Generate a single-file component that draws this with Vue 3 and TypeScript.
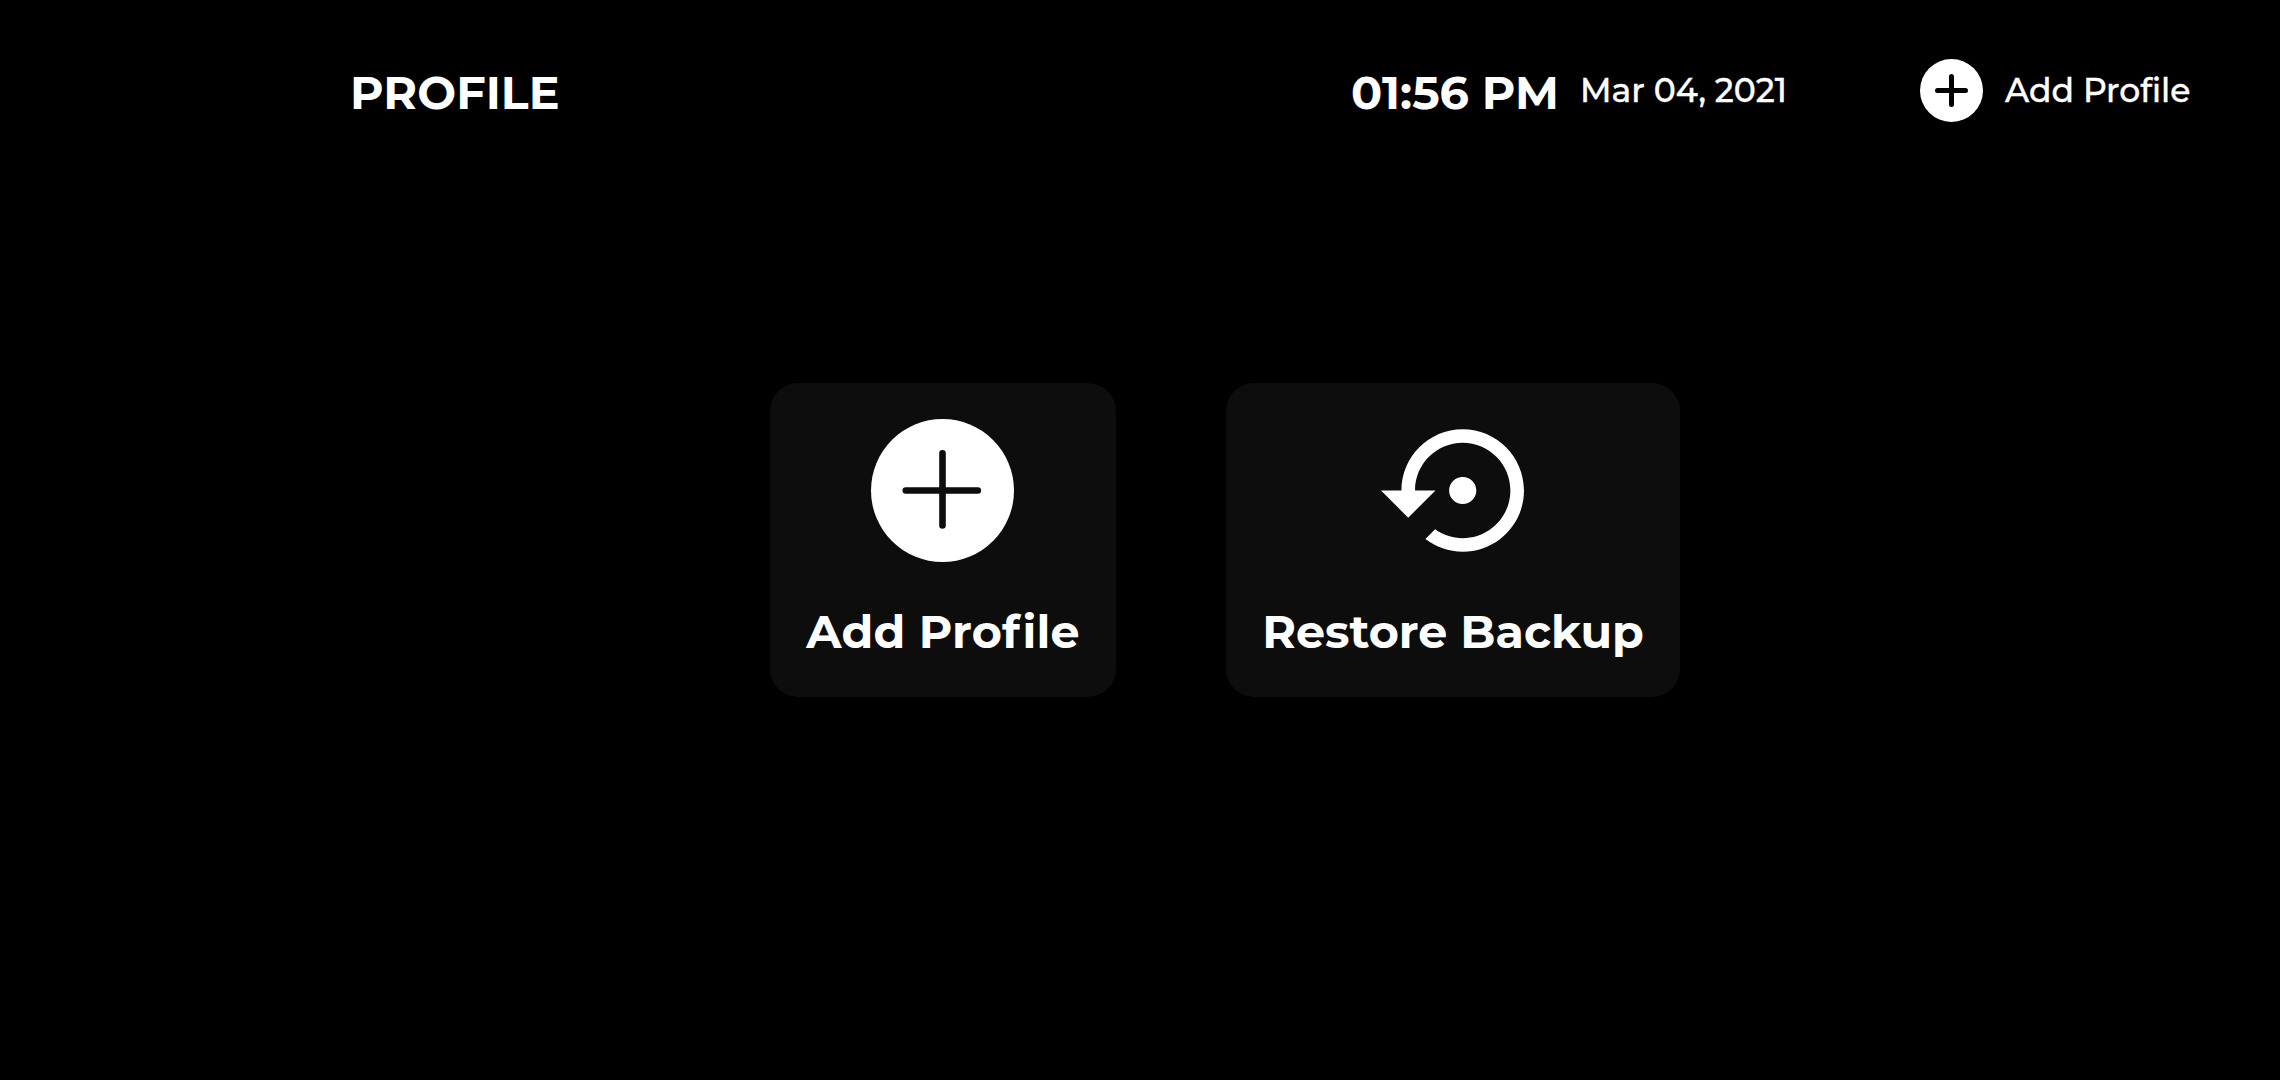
<script setup lang="ts">
import { ref } from 'vue';

const title = ref('PROFILE');
const time = ref('01:56 PM');
const date = ref('Mar 04, 2021');
</script>

<template>
  <div class="screen">
    <header class="header">
      <h1 class="title">{{ title }}</h1>
      <div class="clock">{{ time }}</div>
      <div class="date">{{ date }}</div>
      <button class="add-btn">
        <svg class="add-icon" viewBox="0 0 63 63">
          <circle cx="31.5" cy="31.5" r="31.5" fill="#fff" />
          <path d="M17.5 31.5h28M31.5 17.5v28" stroke="#000" stroke-width="5" stroke-linecap="round" />
        </svg>
        <span class="add-label">Add Profile</span>
      </button>
    </header>

    <main class="content">
      <button class="card add">
        <svg class="card-icon" viewBox="0 0 143 143">
          <circle cx="71.5" cy="71.5" r="71.5" fill="#fff" />
          <path d="M34.8 71.5h72M71.5 34.3v72.2" stroke="#0d0d0d" stroke-width="6.6" stroke-linecap="round" />
        </svg>
        <span class="card-label">Add Pro<span class="loose">f</span>ile</span>
      </button>
      <button class="card restore">
        <svg class="card-icon" viewBox="0 1.5 21 21">
          <path
            fill="#fff"
            d="M14 12c0-1.1-.9-2-2-2s-2 .9-2 2 .9 2 2 2 2-.9 2-2zm-2-9c-4.97 0-9 4.03-9 9H0l4 4 4-4H5c0-3.87 3.13-7 7-7s7 3.13 7 7-3.13 7-7 7c-1.51 0-2.91-.49-4.06-1.3l-1.42 1.44C8.04 20.3 9.94 21 12 21c4.97 0 9-4.03 9-9s-4.03-9-9-9z"
          />
        </svg>
        <span class="card-label">Restore Backup</span>
      </button>
    </main>
  </div>
</template>

<style>
body {
  margin: 0;
  background: #000;
}
</style>

<style scoped>
.screen {
  display: grid;
  grid-template-rows: 181px 718px;
  width: 2280px;
  height: 1080px;
  overflow: hidden;
  background: #000;
  color: #fff;
  font-family: Montserrat, Inter, "Liberation Sans", sans-serif;
}

button {
  margin: 0;
  padding: 0;
  border: none;
  background: none;
  color: inherit;
  font: inherit;
  cursor: pointer;
}

.header {
  display: flex;
  align-items: center;
  padding: 0 80px 0 350px;
  white-space: nowrap;
}

.title,
.clock {
  flex-shrink: 0;
  margin: 4px 0 0;
  font-size: 46px;
  font-weight: 700;
  line-height: 57px;
}

.title {
  width: 1001px;
  letter-spacing: 0.1px;
}

.clock {
  width: 229px;
}

.date,
.add-label {
  margin-bottom: 1px;
  font-size: 33px;
  font-weight: 500;
  line-height: 40px;
  -webkit-text-stroke: 0.4px #fff;
}

.date {
  flex-shrink: 0;
  width: 340px;
}

.add-btn {
  display: flex;
  flex-shrink: 0;
  align-items: center;
  gap: 22px;
}

.add-icon {
  flex-shrink: 0;
  width: 63px;
  height: 63px;
}

.content {
  display: flex;
  align-items: center;
  justify-content: center;
  gap: 110px;
  padding-left: 170px;
}

.card {
  display: flex;
  flex-direction: column;
  align-items: center;
  box-sizing: border-box;
  height: 314px;
  padding-top: 36px;
  border-radius: 28px;
  background: #0d0d0d;
}

.card.add {
  width: 346px;
}

.card.restore {
  width: 454px;
}

.card-icon {
  width: 143px;
  height: 143px;
  margin-right: 1.5px;
}

.card-label {
  margin-top: 41px;
  font-size: 46px;
  font-weight: 700;
  line-height: 57px;
  white-space: nowrap;
}

.add .card-label {
  letter-spacing: 0.2px;
}

.card-label .loose {
  letter-spacing: 2.6px;
}
</style>
